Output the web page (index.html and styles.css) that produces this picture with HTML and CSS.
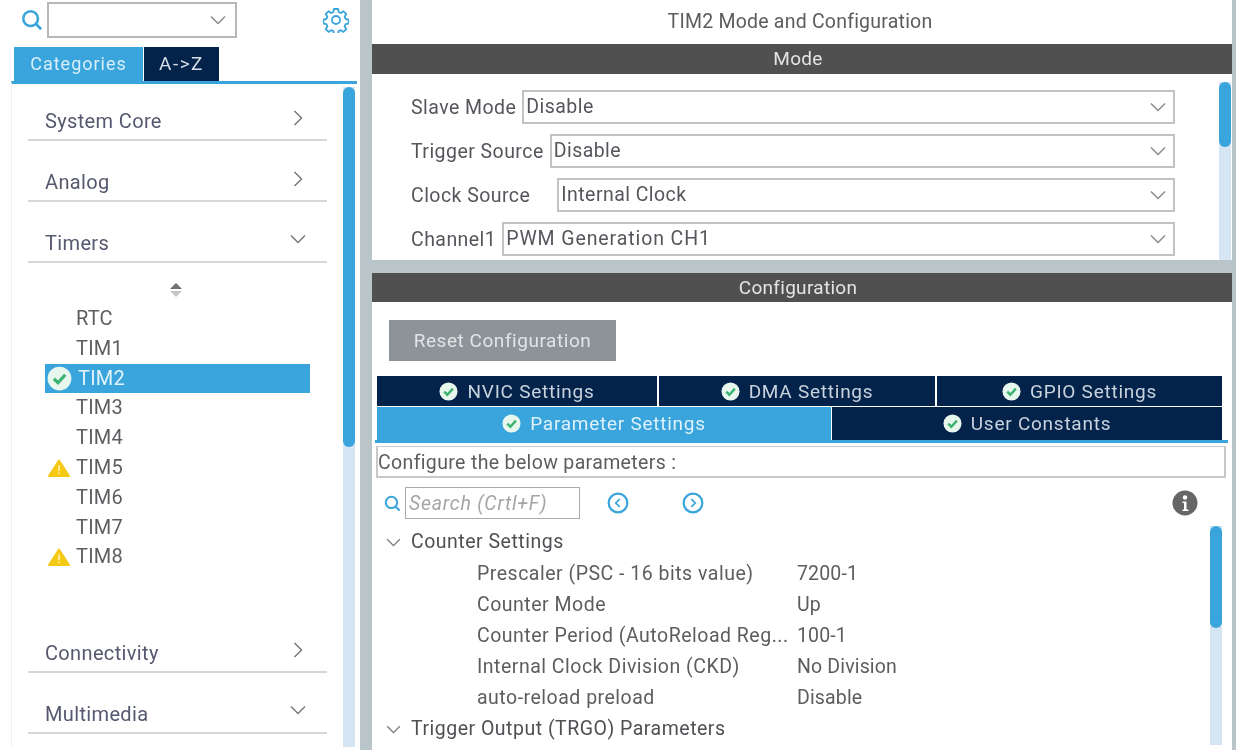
FILE: index.html
```html
<!DOCTYPE html>
<html lang="en">
<head>
    <meta charset="UTF-8">
    <meta name="viewport" content="width=device-width, initial-scale=1.0">
    <title>TIM2 Mode and Configuration</title>
    <link rel="stylesheet" href="styles.css">
</head>
<body>
    <svg class="defs" width="0" height="0">
        <symbol id="down" viewBox="0 0 16 10"><path d="M1 1.5 8 8.5 15 1.5" fill="none" stroke="currentColor" stroke-width="1.5"/></symbol>
        <symbol id="right" viewBox="0 0 10 16"><path d="M1.5 1 8.5 8 1.5 15" fill="none" stroke="currentColor" stroke-width="1.5"/></symbol>
        <symbol id="search" viewBox="0 0 24 24"><circle cx="10.5" cy="10.5" r="8" fill="none" stroke="currentColor" stroke-width="2.8"/><path d="M16.5 16.5 22 22" stroke="currentColor" stroke-width="3"/></symbol>
        <symbol id="ok" viewBox="0 0 20 20"><circle cx="10" cy="10" r="9.5" fill="#e8f7ee"/><path d="M5.5 10.2 8.8 13.4 14.6 7" fill="none" stroke="#3cb371" stroke-width="2.6"/></symbol>
        <symbol id="warn" viewBox="0 0 22 18"><path d="M11 1.5 21 17H1Z" fill="#f6c915" stroke="#f6c915" stroke-width="2" stroke-linejoin="round"/><path d="M11 6.5V12M11 13.5V15" stroke="#fff3b8" stroke-width="1.6"/></symbol>
    </svg>

    <div class="left">
        <div class="finder">
            <svg class="find-icon"><use href="#search"/></svg>
            <div class="find-box"><svg class="chev"><use href="#down"/></svg></div>
            <svg class="gear" viewBox="0 0 26 26">
                <path d="M11 2h4l.6 3 2.3 1 2.6-1.700 2.800 2.800-1.700 2.600 1 2.300 3 .6v4l-3 .6-1 2.300 1.700 2.600-2.800 2.800-2.600-1.700-2.300 1-.6 3h-4l-.6-3-2.300-1-2.600 1.700-2.800-2.800 1.700-2.600-1-2.300-3-.6v-4l3-.6 1-2.300-1.700-2.600 2.800-2.800 2.600 1.700 2.300-1z" fill="none" stroke="currentColor" stroke-width="1.800" stroke-linejoin="round"/>
                <circle cx="13" cy="13" r="4" fill="none" stroke="currentColor" stroke-width="1.800"/>
            </svg>
        </div>
        <div class="side-tabs">
            <div class="side-tab on">Categories</div>
            <div class="side-tab">A-&gt;Z</div>
        </div>
        <div class="side-panel">
            <div class="cats">
                <div class="cat"><span>System Core</span><svg class="cat-right"><use href="#right"/></svg></div>
                <div class="cat"><span>Analog</span><svg class="cat-right"><use href="#right"/></svg></div>
                <div class="cat"><span>Timers</span><svg class="cat-down"><use href="#down"/></svg></div>
                <div class="sorter"><span class="up"></span><span class="dn"></span></div>
                <div class="items">
                    <div class="item">RTC</div>
                    <div class="item">TIM1</div>
                    <div class="item sel"><svg class="ico-ok"><use href="#ok"/></svg>TIM2</div>
                    <div class="item">TIM3</div>
                    <div class="item">TIM4</div>
                    <div class="item"><svg class="ico-warn"><use href="#warn"/></svg>TIM5</div>
                    <div class="item">TIM6</div>
                    <div class="item">TIM7</div>
                    <div class="item"><svg class="ico-warn"><use href="#warn"/></svg>TIM8</div>
                </div>
                <div class="cat cat-conn"><span>Connectivity</span><svg class="cat-right"><use href="#right"/></svg></div>
                <div class="cat"><span>Multimedia</span><svg class="cat-down"><use href="#down"/></svg></div>
            </div>
            <div class="track side-track"><div class="thumb"></div></div>
        </div>
    </div>

    <div class="right">
        <div class="title">TIM2 Mode and Configuration</div>
        <div class="bar">Mode</div>
        <div class="mode">
            <div class="mode-form">
                <div class="mode-row"><label>Slave Mode</label><div class="sel-box">Disable<svg class="chev"><use href="#down"/></svg></div></div>
                <div class="mode-row"><label>Trigger Source</label><div class="sel-box">Disable<svg class="chev"><use href="#down"/></svg></div></div>
                <div class="mode-row"><label class="wide">Clock Source</label><div class="sel-box">Internal Clock<svg class="chev"><use href="#down"/></svg></div></div>
                <div class="mode-row"><label>Channel1</label><div class="sel-box pwm">PWM Generation CH1<svg class="chev"><use href="#down"/></svg></div></div>
            </div>
            <div class="track mode-track"><div class="thumb"></div></div>
        </div>
        <div class="split"></div>
        <div class="bar bar-conf">Configuration</div>
        <div class="conf">
            <button class="reset">Reset Configuration</button>
            <div class="tab-row row-a">
                <div class="tab t-nvic"><svg class="ico-tab"><use href="#ok"/></svg>NVIC Settings</div>
                <div class="tab t-dma"><svg class="ico-tab"><use href="#ok"/></svg>DMA Settings</div>
                <div class="tab t-gpio"><svg class="ico-tab"><use href="#ok"/></svg>GPIO Settings</div>
            </div>
            <div class="tab-row row-b">
                <div class="tab t-param"><svg class="ico-tab"><use href="#ok"/></svg>Parameter Settings</div>
                <div class="tab t-user"><svg class="ico-tab"><use href="#ok"/></svg>User Constants</div>
            </div>
            <div class="tab-line"></div>
            <div class="hint">Configure the below parameters :</div>
            <div class="tools">
                <svg class="tool-search"><use href="#search"/></svg>
                <div class="search-box">Search (Crtl+F)</div>
                <svg class="nav nav-prev" viewBox="0 0 20 20"><circle cx="10" cy="10" r="8.500" fill="none" stroke="currentColor" stroke-width="2"/><path d="M11.500 6.500 8 10l3.500 3.500" fill="none" stroke="currentColor" stroke-width="1.600"/></svg>
                <svg class="nav nav-next" viewBox="0 0 20 20"><circle cx="10" cy="10" r="8.500" fill="none" stroke="currentColor" stroke-width="2"/><path d="M8.500 6.500 12 10l-3.500 3.500" fill="none" stroke="currentColor" stroke-width="1.600"/></svg>
                <svg class="info" viewBox="0 0 26 26"><circle cx="13" cy="13" r="12.500" fill="#666"/><circle cx="13" cy="7.500" r="2.200" fill="#fff"/><path d="M10.500 11.500h4v8h2v1.500h-6v-1.500h1.500v-6.500h-1.500z" fill="#fff"/></svg>
            </div>
            <div class="tree-wrap">
                <div class="tree">
                    <div class="group"><svg class="tree-chev"><use href="#down"/></svg>Counter Settings</div>
                    <div class="param"><span class="p-name">Prescaler (PSC - 16 bits value)</span><span class="p-val">7200-1</span></div>
                    <div class="param"><span class="p-name">Counter Mode</span><span class="p-val">Up</span></div>
                    <div class="param"><span class="p-name">Counter Period (AutoReload Reg...</span><span class="p-val">100-1</span></div>
                    <div class="param"><span class="p-name">Internal Clock Division (CKD)</span><span class="p-val">No Division</span></div>
                    <div class="param"><span class="p-name">auto-reload preload</span><span class="p-val">Disable</span></div>
                    <div class="group"><svg class="tree-chev"><use href="#down"/></svg>Trigger Output (TRGO) Parameters</div>
                </div>
                <div class="track tree-track"><div class="thumb"></div></div>
            </div>
        </div>
    </div>
    <div class="edge"></div>
</body>
</html>
```

FILE: styles.css
```css
html, body {
    margin: 0;
    height: 750px;
    overflow: hidden;
}
body {
    display: flex;
    background: #fff;
    font-family: Roboto, "Liberation Sans", sans-serif;
    color: #55565c;
    filter: blur(0.45px);
}
.defs {
    position: absolute;
}
.left {
    width: 360px;
    flex: none;
    border-right: 12px solid #b9c5c9;
}
.right {
    width: 860px;
    flex: none;
}
.edge {
    flex: 1;
    background: #b9c5c9;
}

/* left side */
.finder {
    display: flex;
    align-items: center;
    height: 40px;
    padding-left: 21px;
}
.find-icon {
    width: 22px;
    height: 22px;
    color: #39a5dc;
    margin-right: 4px;
}
.find-box {
    width: 190px;
    height: 36px;
    border: 2px solid #b8b8b8;
    box-sizing: border-box;
    display: flex;
    align-items: center;
    justify-content: flex-end;
}
.chev {
    width: 16px;
    height: 10px;
    color: #8b8b8b;
    margin-right: 6px;
    margin-left: auto;
}
.mode-row .chev {
    margin-right: 7px;
}
.find-box .chev {
    margin-right: 9px;
}
.gear {
    width: 26px;
    height: 26px;
    color: #39a5dc;
    margin-left: 86px;
}
.side-tabs {
    display: flex;
    margin: 7px 0 0 14px;
    height: 34px;
}
.side-tab {
    width: 75px;
    background: #03234b;
    color: #d5dde6;
    font-size: 19px;
    letter-spacing: 1.5px;
    line-height: 34px;
    text-align: center;
}
.side-tab.on {
    width: 129px;
    margin-right: 1px;
    background: #39a5dc;
    font-size: 18px;
    letter-spacing: 1px;
    color: #d8eef9;
}
.side-panel {
    display: flex;
    margin: 0 3px 0 11px;
    height: 666px;
    border-top: 3px solid #39a5dc;
    border-left: 1px solid #eef0f1;
    box-sizing: border-box;
}
.cats {
    width: 331px;
    flex: none;
}
.cat {
    display: flex;
    align-items: center;
    justify-content: space-between;
    width: 299px;
    height: 39px;
    margin: 20px 0 0 16px;
    border-bottom: 2px solid #d4d8da;
    font-size: 20px;
    letter-spacing: 0.35px;
    color: #55586e;
}
.cat:first-child {
    margin-top: 16px;
}
.cat span {
    margin-left: 17px;
    position: relative;
    top: 1px;
}
.cat-right {
    width: 10px;
    height: 16px;
    color: #77797d;
    margin-right: 24px;
    margin-top: -4px;
}
.cat-down {
    width: 16px;
    height: 10px;
    color: #77797d;
    margin-right: 21px;
    margin-top: -6px;
}
.cat-conn {
    margin-top: 0;
}
.sorter {
    display: flex;
    flex-direction: column;
    align-items: center;
    gap: 2px;
    width: 20px;
    margin: 20px 0 0 154px;
    height: 18px;
}
.up, .dn {
    width: 0;
    height: 0;
    border-left: 6px solid transparent;
    border-right: 6px solid transparent;
}
.up {
    border-bottom: 6px solid #6e7276;
}
.dn {
    border-top: 6px solid #c3c6c8;
}
.items {
    margin: 3px 0 0 33px;
    height: 328px;
}
.item {
    position: relative;
    width: 265px;
    height: 29.8px;
    line-height: 29.8px;
    padding-left: 31px;
    box-sizing: border-box;
    font-size: 20px;
    letter-spacing: 0.2px;
    color: #5e5e62;
}
.sel {
    background: #39a5dc;
    color: #e2f3fb;
    padding-left: 33px;
}
.ico-ok {
    position: absolute;
    left: 2px;
    top: 2px;
    width: 25px;
    height: 25px;
}
.ico-warn {
    position: absolute;
    left: 3px;
    top: 6px;
    width: 22px;
    height: 18px;
}

/* scrollbars */
.track {
    background: #d5e5f3;
    width: 12px;
    flex: none;
}
.thumb {
    background: #39a5dc;
    border-radius: 6px;
}
.side-track {
    margin-top: 0;
    border-top: 3px solid #fff;
}
.side-track .thumb {
    height: 360px;
}
.mode-track .thumb {
    height: 65px;
}
.tree-track {
    height: 219px;
}
.tree-track .thumb {
    height: 102px;
}

/* right side */
.title {
    height: 44px;
    line-height: 43px;
    padding-right: 4px;
    text-align: center;
    font-size: 19.500px;
    letter-spacing: 0.22px;
    color: #5c5c60;
}
.bar {
    height: 30px;
    line-height: 30px;
    padding-right: 8px;
    background: #505050;
    color: #e4e4e4;
    text-align: center;
    font-size: 19px;
    letter-spacing: 0.3px;
}
.mode {
    display: flex;
    justify-content: space-between;
    height: 186px;
    padding: 8px 1px 0 0;
    box-sizing: border-box;
}
.mode-form {
    width: 764px;
    padding: 8px 0 0 39px;
}
.mode-row {
    display: flex;
    align-items: center;
    height: 34px;
    margin-bottom: 10px;
    font-size: 19.500px;
    letter-spacing: 0.45px;
}
.mode-row label {
    margin-right: 6px;
    white-space: nowrap;
}
.mode-row .wide {
    margin-right: 27px;
}
.sel-box {
    flex: 1;
    height: 34px;
    line-height: 32px;
    padding-left: 2px;
    display: flex;
    align-items: center;
    border: 2px solid #c2c2c2;
    box-sizing: border-box;
}
.pwm {
    letter-spacing: 0.9px;
}
.mode-track {
    height: 178px;
}
.split {
    height: 13px;
    background: #b9c5c9;
}
.bar-conf {
    height: 29px;
    line-height: 29px;
}
.conf {
    padding: 18px 0 0 4px;
}
.reset {
    display: block;
    width: 227px;
    height: 41px;
    margin: 0 0 15px 13px;
    padding: 0;
    border: none;
    background: #8d9499;
    color: #e2e4e5;
    font: 19px Roboto, sans-serif;
    letter-spacing: 0.55px;
}
.tab-row {
    display: flex;
    margin-left: 1px;
    width: 845px;
}
.tab {
    display: flex;
    align-items: center;
    justify-content: center;
    background: #03234b;
    color: #c9d3de;
    font-size: 19px;
    letter-spacing: 0.75px;
    box-sizing: border-box;
}
.row-a {
    height: 30px;
    gap: 2px;
    margin-bottom: 1px;
}
.row-b {
    height: 33px;
    gap: 1px;
}
.t-nvic {
    width: 280px;
}
.t-dma {
    width: 276px;
}
.t-gpio {
    width: 285px;
}
.t-param {
    width: 454px;
    background: #39a5dc;
    color: #dff1fa;
}
.t-user {
    flex: 1;
}
.ico-tab {
    width: 19px;
    height: 19px;
    margin-right: 9px;
}
.tab-line {
    width: 853px;
    height: 3px;
    margin-left: -1px;
    background: #39a5dc;
}
.hint {
    height: 32px;
    line-height: 32px;
    margin: 3px 6px 0 0;
    border: 2px solid #c8c8c8;
    border-top-width: 1px;
    box-sizing: border-box;
    font-size: 19.500px;
    letter-spacing: 0.35px;
    color: #5d5d5f;
}
.tools {
    display: flex;
    align-items: center;
    height: 32px;
    margin-top: 9px;
    padding-left: 8px;
}
.tool-search {
    width: 17px;
    height: 17px;
    color: #39a5dc;
    margin-right: 4px;
}
.search-box {
    width: 175px;
    height: 32px;
    line-height: 31px;
    padding-left: 3px;
    border: 1px solid #a9a9a9;
    box-sizing: border-box;
    font-size: 19.500px;
    letter-spacing: 0.75px;
    font-style: italic;
    color: #a5a5a8;
}
.nav {
    width: 22px;
    height: 22px;
    color: #39a5dc;
}
.nav-prev {
    margin-left: 27px;
}
.nav-next {
    margin-left: 53px;
}
.info {
    width: 26px;
    height: 26px;
    margin-left: 468px;
}
.tree-wrap {
    display: flex;
    justify-content: space-between;
    width: 846px;
    margin-top: 7px;
}
.tree {
    padding: 0 0 0 35px;
    font-size: 19.500px;
    letter-spacing: 0.5px;
}
.group {
    position: relative;
    height: 31.500px;
    line-height: 31.500px;
    color: #4f5054;
}
.tree-chev {
    position: absolute;
    left: -25px;
    top: 12px;
    width: 15px;
    height: 9px;
    color: #7b7b7b;
}
.param {
    display: flex;
    height: 31.200px;
    line-height: 31.200px;
    padding-left: 66px;
    color: #5d5d5f;
}
.p-name {
    width: 320px;
    white-space: nowrap;
}
.p-val {
    letter-spacing: 0.15px;
}
```
